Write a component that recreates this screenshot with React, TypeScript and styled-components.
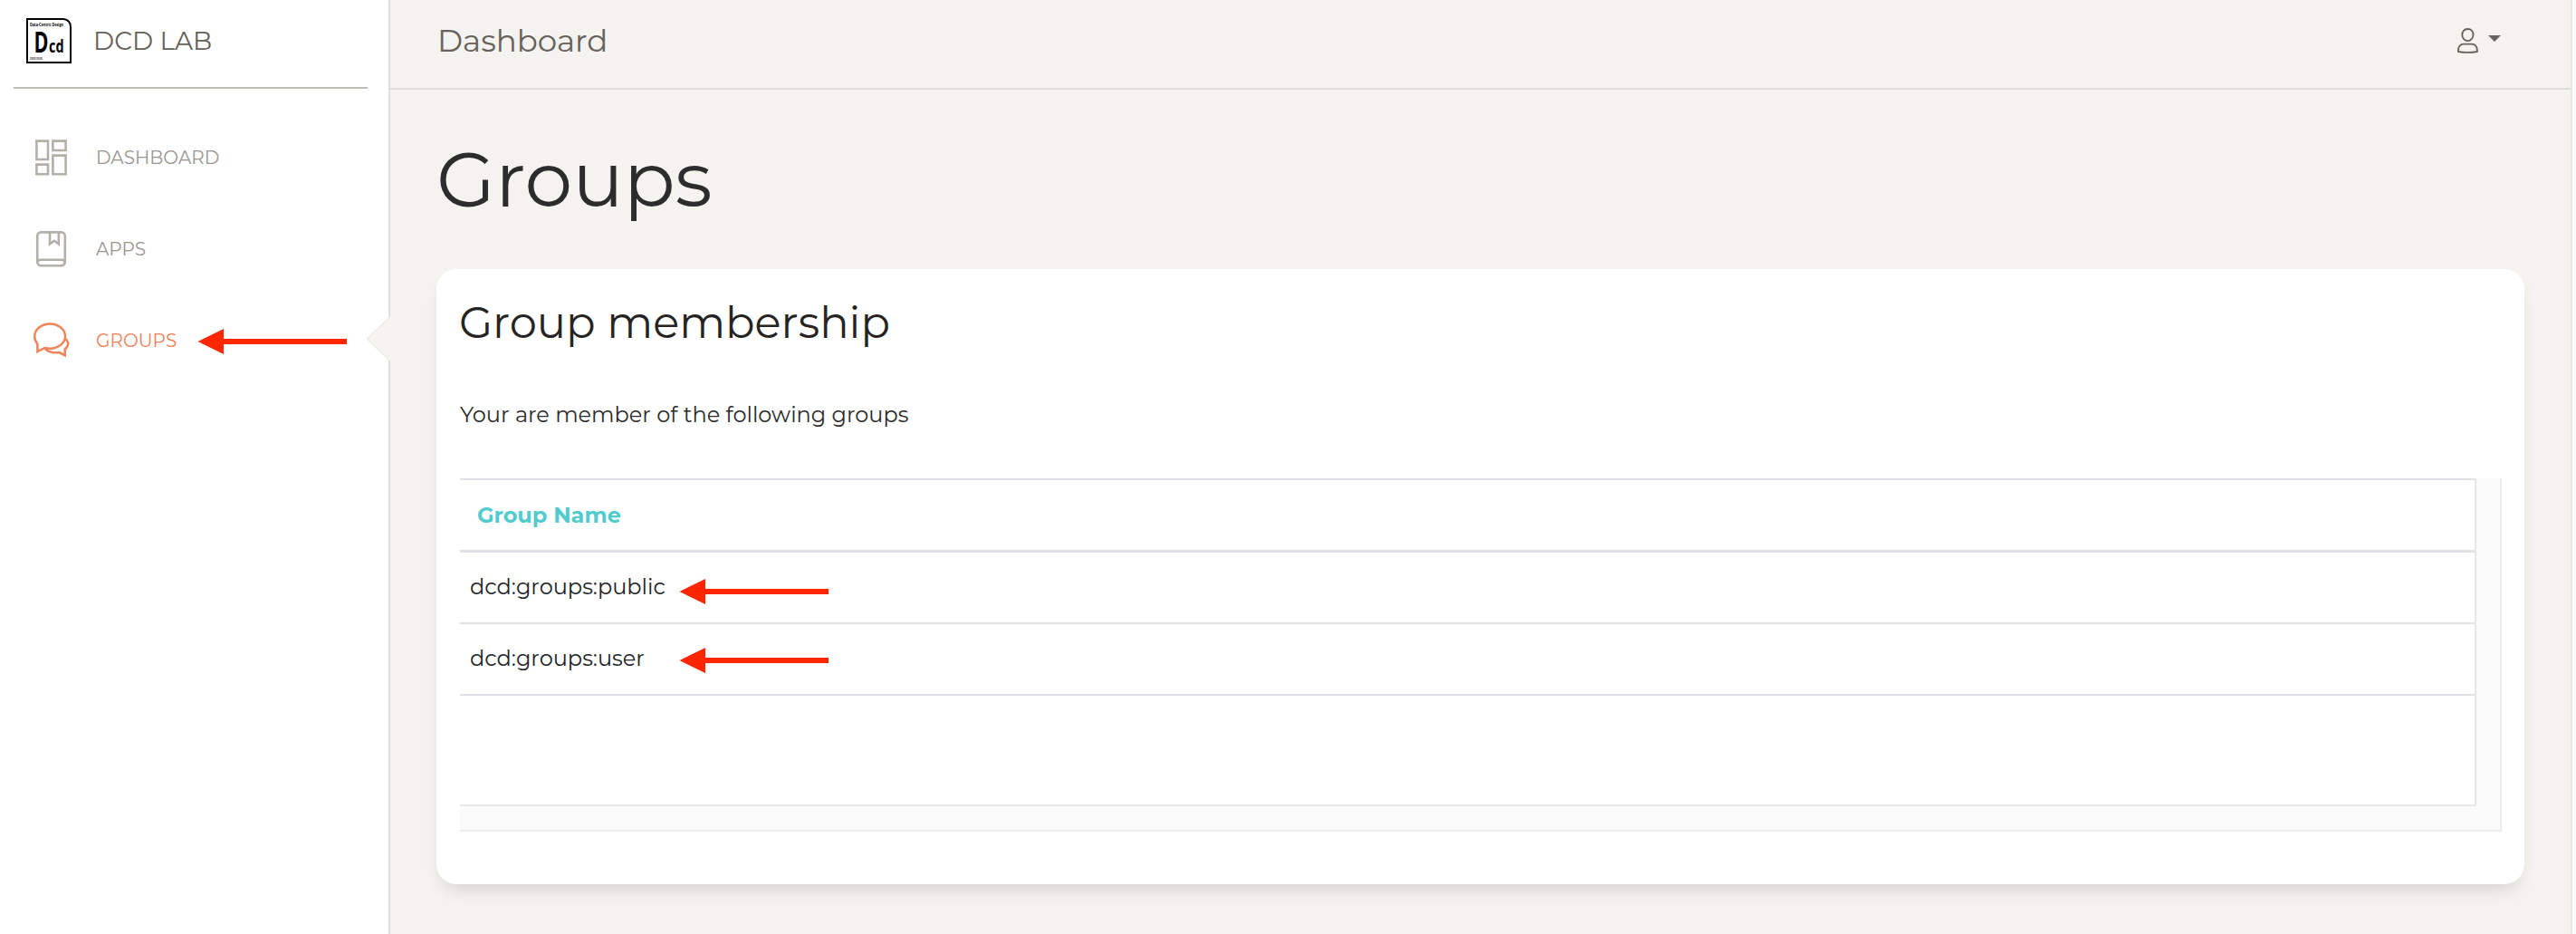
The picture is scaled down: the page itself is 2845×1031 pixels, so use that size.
import React from 'react';
import styled, { createGlobalStyle } from 'styled-components';

const Global = createGlobalStyle`
  * { box-sizing: border-box; }
  body {
    margin: 0;
    background: #f4f3ef;
    font-family: Montserrat, Inter, "Open Sans", sans-serif;
    -webkit-font-smoothing: antialiased;
  }
`;

const Shell = styled.div`
  display: flex;
  height: 1031px;
  overflow: hidden;
  background: #fafafa;
`;

const Sidebar = styled.aside`
  position: relative;
  flex: none;
  width: 431px;
  background: #fff;
  border-right: 2px solid #dddddd;
`;

const Brand = styled.div`
  display: flex;
  align-items: center;
  gap: 24px;
  height: 98px;
  margin: 0 23px 0 15px;
  padding: 0 0 6px 14px;
  border-bottom: 2px solid #bdbcb6;
`;

const Label = styled.span<{ $size: number; $weight?: number; $color?: string }>`
  font-size: ${p => p.$size}px;
  font-weight: ${p => p.$weight ?? 400};
  color: ${p => p.$color ?? '#252422'};
  white-space: nowrap;
`;

const Nav = styled.nav`
  display: flex;
  flex-direction: column;
  padding-top: 25px;
`;

const NavItem = styled.div<{ $active?: boolean }>`
  display: flex;
  align-items: center;
  height: 101px;
  padding-left: 36px;
  gap: 29px;
  color: ${p => (p.$active ? '#f0845a' : '#b3afa9')};

  ${Label} {
    padding-top: 1px;
  }
`;

const Notch = styled.svg`
  position: absolute;
  left: 404px;
  top: 348px;
`;

const Annotation = styled.svg<{ $x: number; $y: number }>`
  position: absolute;
  left: ${p => p.$x}px;
  top: ${p => p.$y}px;
`;

const Main = styled.main`
  flex: none;
  width: 2410px;
  background: #f4f3ef;
  border-right: 2px solid #e7e7e7;
`;

const Header = styled.header`
  display: flex;
  align-items: center;
  justify-content: space-between;
  height: 99px;
  padding: 0 77px 7px 52px;
  border-bottom: 2px solid #dddddd;
`;

const UserMenu = styled.div`
  display: flex;
  align-items: center;
  gap: 10px;
`;

const Caret = styled.i`
  border: 7px solid transparent;
  border-top-color: #66615b;
  border-bottom: 0;
  margin-top: -6px;
`;

const Content = styled.section`
  padding: 51px 51px 0;
`;

const PageTitle = styled.h1`
  margin: 0 0 51px;
  font-size: 84px;
  line-height: 96px;
  font-weight: 400;
  color: #2c2c2c;
`;

const Card = styled.article`
  height: 679px;
  padding: 29px 25px 0 26px;
  background: #fff;
  border-radius: 22px;
  box-shadow: 0 12px 20px -8px rgba(0, 0, 0, 0.15);
`;

const CardTitle = styled.h2`
  margin: 0 0 54px -1px;
  font-size: 48px;
  line-height: 60px;
  font-weight: 400;
  color: #252422;
`;

const Intro = styled.p`
  margin: 0 0 52px;
  font-size: 24px;
  line-height: 36px;
  color: #2c2c2c;
`;

const ScrollFrame = styled.div`
  height: 390px;
  padding: 0 26px 26px 0;
  background: #fafafa;
  border: solid #ededed;
  border-width: 0 2px 2px 0;
`;

const ScrollBody = styled.div`
  position: relative;
  height: 362px;
  background: #fff;
  border: solid #e7e7e7;
  border-width: 0 2px 2px 0;
`;

const Row = styled.div<{ $head?: boolean }>`
  display: flex;
  align-items: center;
  height: ${p => (p.$head ? 82 : 79)}px;
  padding: ${p => (p.$head ? '0 0 0 19px' : '0 0 3px 11px')};
  border-top: ${p => (p.$head ? '2px solid #dee2e6' : '0')};
  border-bottom: ${p => (p.$head ? 3 : 2)}px solid #dee2e6;
`;

const Arrow = ({ x, y }: { x: number; y: number }) => (
  <Annotation $x={x} $y={y} width="166" height="30" viewBox="0 0 166 30">
    <path d="M0.5 15 L29 1 V12 H165 V18 H29 V29 Z" fill="#ff2600" />
  </Annotation>
);

const Logo = () => (
  <svg width="50" height="50" viewBox="0 0 50 50" overflow="visible">
    <path d="M1 1H41Q49 2 49 10V49H1Z" fill="#fff" stroke="#000" strokeWidth="2" />
    <g fontFamily="Open Sans, sans-serif" fontWeight="700">
      <text x="4" y="9" fontSize="5.6" textLength="37" lengthAdjust="spacingAndGlyphs">Data-Centric Design</text>
      <text x="8.5" y="38" fontSize="33" textLength="16" lengthAdjust="spacingAndGlyphs">D</text>
      <text x="25" y="38" fontSize="19" textLength="16.5" lengthAdjust="spacingAndGlyphs">cd</text>
      <text x="4" y="46" fontSize="3.6" fill="#333" textLength="14" lengthAdjust="spacingAndGlyphs">DDDD DDDD</text>
    </g>
  </svg>
);

const DashboardIcon = () => (
  <svg width="41" height="42" viewBox="0 0 41 42" fill="none" stroke="currentColor" strokeWidth="2.6">
    <path d="M4.4 2.6H17V23H4.4ZM22.4 2.6H36.6V13H22.4ZM4.4 28.6H17V39.2H4.4ZM22.4 18.6H36.6V39.2H22.4Z" />
  </svg>
);

const BookIcon = () => (
  <svg width="41" height="42" viewBox="0 0 41 42" fill="none" stroke="currentColor" strokeWidth="2.6">
    <rect x="5.2" y="2.4" width="30.6" height="36.8" rx="4" />
    <path d="M5.2 36.5Q5.2 32.8 9 32.8H32Q35.8 32.8 35.8 36.5M19 2.6V15.4L23.9 11.8L28.8 15.4V2.6" />
  </svg>
);

const ChatIcon = () => (
  <svg width="41" height="42" viewBox="0 0 41 42" fill="none" stroke="currentColor" strokeWidth="2.5">
    <path d="M5.4 33.2V24.7C3.3 22.3 2.2 19.3 2.2 16.3C2.2 8.8 9.7 2.4 19.2 2.4S36 8.8 36 16.3S28.5 29.7 19.2 29.7C17 29.7 15.2 29.4 13.3 29Z" />
    <path d="M13.8 29.8C17 33.3 22.5 34.8 29.2 33.9L35.7 37.4V30.5C40.8 26 40 21.5 35.6 18.7" />
  </svg>
);

const UserIcon = () => (
  <svg width="24" height="30" viewBox="0 0 24 30" fill="none" stroke="#66615b" strokeWidth="1.8">
    <path d="M11.4 2C7.4 2 5.3 4.8 5.3 8.4C5.3 12 8 15.2 11.4 15.2S17.5 12 17.5 8.4C17.5 4.8 15.4 2 11.4 2Z" />
    <path d="M.9 27C.5 21.4 3.2 18.6 7 18.6H15.8C19.6 18.6 22.3 21.4 21.9 27Q11.4 28.8 .9 27Z" />
  </svg>
);

export default function App() {
  return (
    <>
      <Global />
      <Shell>
        <Sidebar>
          <Brand>
            <Logo />
            <Label $size={28} $color="#66615b">DCD LAB</Label>
          </Brand>
          <Nav>
            <NavItem>
              <DashboardIcon />
              <Label $size={20} $color="#9a9691">DASHBOARD</Label>
            </NavItem>
            <NavItem>
              <BookIcon />
              <Label $size={20} $color="#9a9691">APPS</Label>
            </NavItem>
            <NavItem $active>
              <ChatIcon />
              <Label $size={20} $color="#ef8157">GROUPS</Label>
            </NavItem>
          </Nav>
          <Notch width="27" height="52" viewBox="0 0 27 52">
            <path d="M27 1L1 26L27 51Z" fill="#f4f3ef" />
            <path d="M27 1L1 26L27 51" fill="none" stroke="#e6e5e1" strokeWidth="1" />
          </Notch>
          <Arrow x={218} y={362} />
        </Sidebar>
        <Main>
          <Header>
            <Label $size={34} $color="#66615b">Dashboard</Label>
            <UserMenu>
              <UserIcon />
              <Caret />
            </UserMenu>
          </Header>
          <Content>
            <PageTitle>Groups</PageTitle>
            <Card>
              <CardTitle>Group membership</CardTitle>
              <Intro>Your are member of the following groups</Intro>
              <ScrollFrame>
                <ScrollBody>
                  <Row $head>
                    <Label $size={24} $weight={700} $color="#51cbce">Group Name</Label>
                  </Row>
                  <Row>
                    <Label $size={24} $color="#212529">dcd:groups:public</Label>
                  </Row>
                  <Row>
                    <Label $size={24} $color="#212529">dcd:groups:user</Label>
                  </Row>
                  <Arrow x={242} y={110} />
                  <Arrow x={242} y={186} />
                </ScrollBody>
              </ScrollFrame>
            </Card>
          </Content>
        </Main>
      </Shell>
    </>
  );
}
